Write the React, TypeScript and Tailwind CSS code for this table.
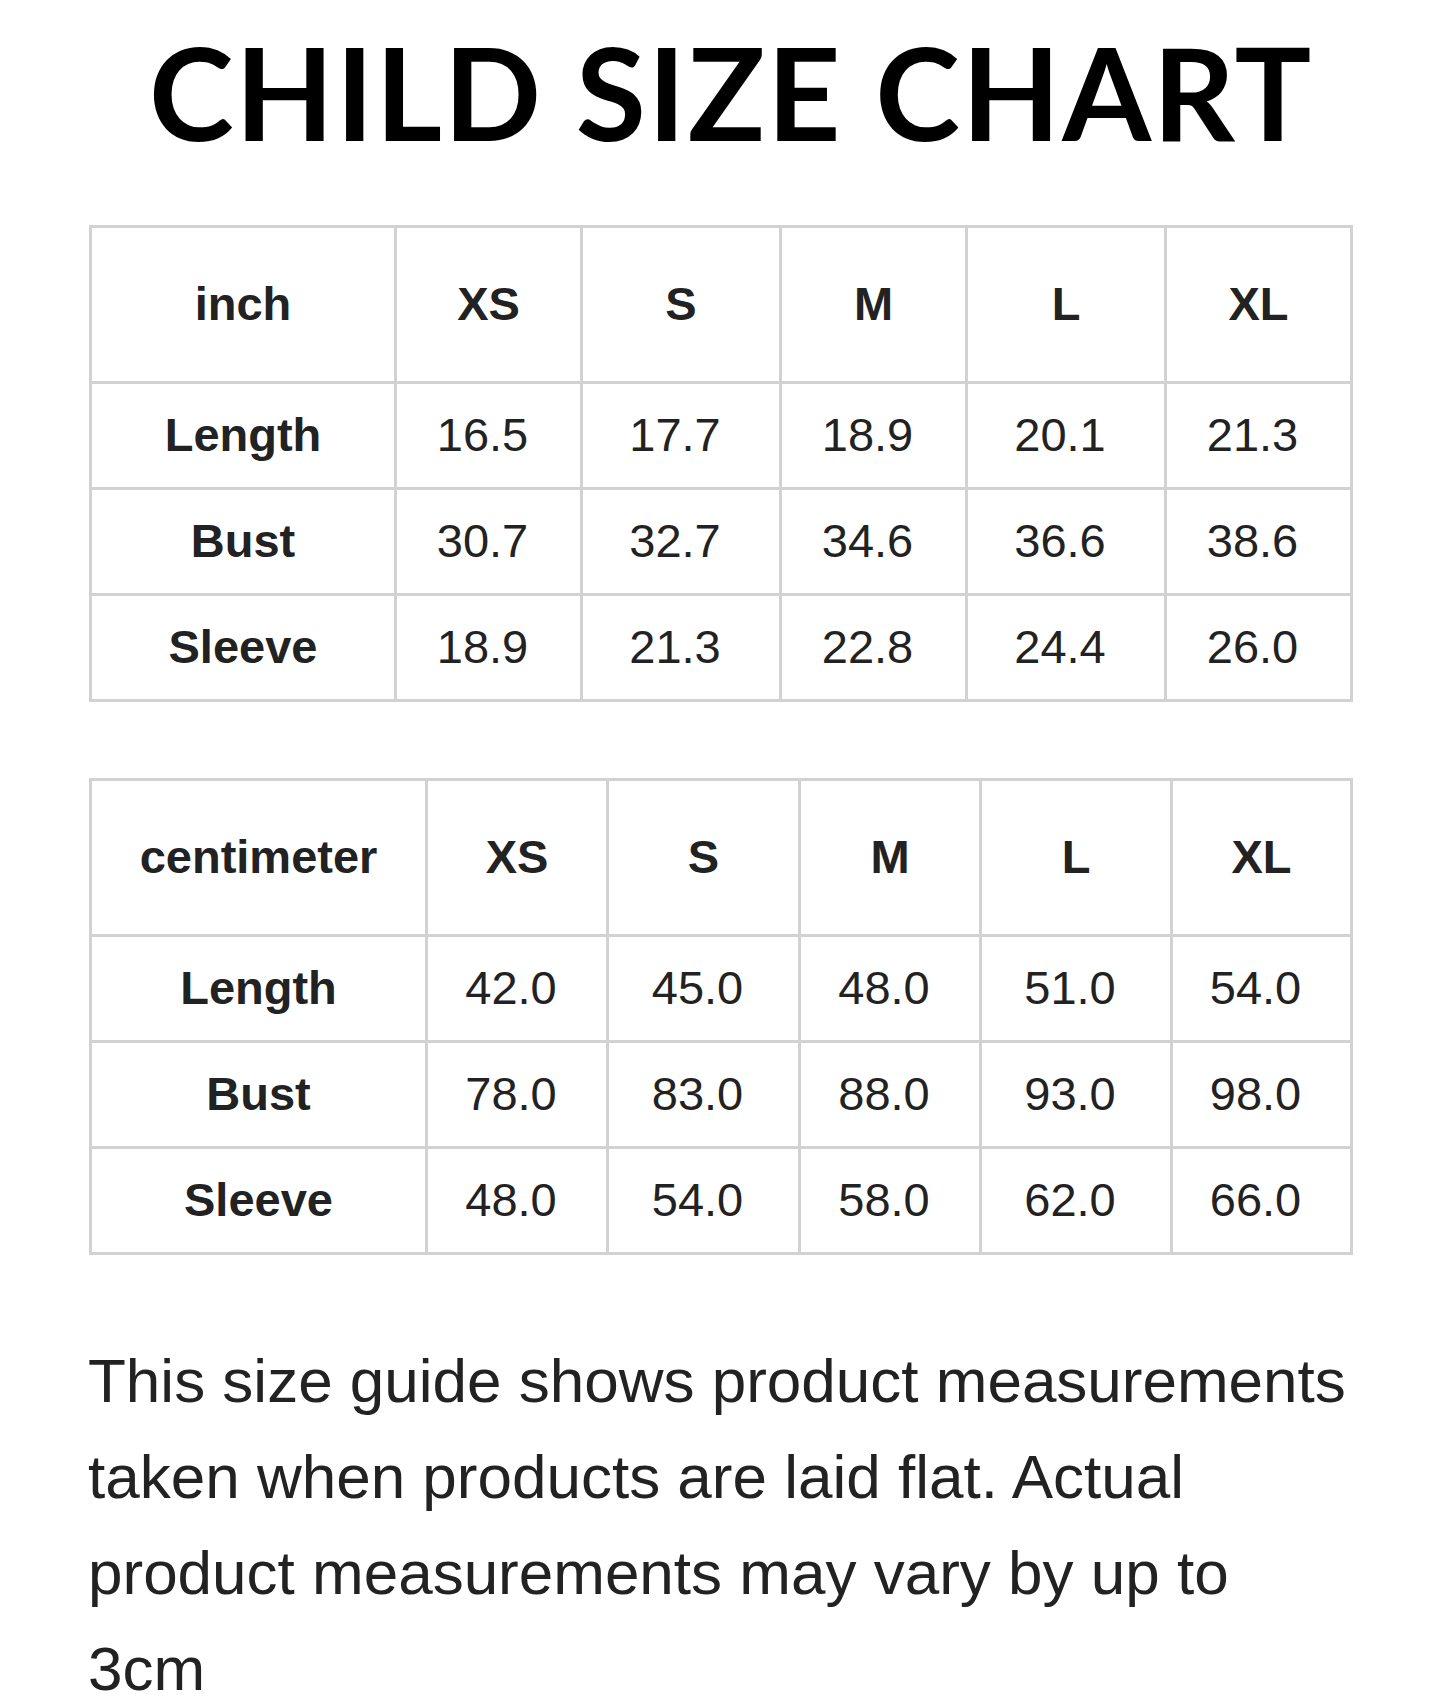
const SIZES = ["XS", "S", "M", "L", "XL"];

type Chart = {
  unit: string;
  cols: number[];
  rows: { label: string; values: string[] }[];
};

const CHARTS: Chart[] = [
  {
    unit: "inch",
    cols: [305, 186, 199, 186, 199, 186],
    rows: [
      { label: "Length", values: ["16.5", "17.7", "18.9", "20.1", "21.3"] },
      { label: "Bust", values: ["30.7", "32.7", "34.6", "36.6", "38.6"] },
      { label: "Sleeve", values: ["18.9", "21.3", "22.8", "24.4", "26.0"] },
    ],
  },
  {
    unit: "centimeter",
    cols: [336, 181, 192, 181, 191, 180],
    rows: [
      { label: "Length", values: ["42.0", "45.0", "48.0", "51.0", "54.0"] },
      { label: "Bust", values: ["78.0", "83.0", "88.0", "93.0", "98.0"] },
      { label: "Sleeve", values: ["48.0", "54.0", "58.0", "62.0", "66.0"] },
    ],
  },
];

function SizeTable({ chart }: { chart: Chart }) {
  return (
    <table className="w-[1262px] table-fixed border-collapse border-[3px] border-[#d2d2d2] text-[47px] text-[#222]">
      <colgroup>
        {chart.cols.map((w, i) => (
          <col key={i} style={{ width: w }} />
        ))}
      </colgroup>
      <thead>
        <tr className="h-[156px]">
          <th className="border-[3px] border-[#d2d2d2] text-center align-middle font-bold">{chart.unit}</th>
          {SIZES.map((s) => (
            <th key={s} className="border-[3px] border-[#d2d2d2] text-center align-middle font-bold">
              {s}
            </th>
          ))}
        </tr>
      </thead>
      <tbody>
        {chart.rows.map((row) => (
          <tr key={row.label} className="h-[106px]">
            <td className="border-[3px] border-[#d2d2d2] text-center align-middle font-bold">{row.label}</td>
            {row.values.map((v, i) => (
              <td key={i} className="border-[3px] border-[#d2d2d2] pr-3 text-center align-middle">
                {v}
              </td>
            ))}
          </tr>
        ))}
      </tbody>
    </table>
  );
}

export default function App() {
  return (
    <div className="min-h-[1708px] w-[1445px] bg-white font-['Liberation_Sans',Arial,sans-serif]">
      <h1 className="pl-[17px] pt-[22px] text-center font-['Lato',sans-serif] text-[128px] leading-[140px] font-bold tracking-[1.8px] text-black">
        CHILD SIZE CHART
      </h1>
      <div className="ml-[89px] mt-[63px] flex flex-col gap-[76px]">
        {CHARTS.map((c) => (
          <SizeTable key={c.unit} chart={c} />
        ))}
      </div>
      <p className="ml-[88px] mt-[78px] w-[1262px] text-[62px] leading-[96px] text-[#222]">
        This size guide shows product measurements taken when products are laid flat. Actual product measurements may vary by up to 3cm
      </p>
    </div>
  );
}
